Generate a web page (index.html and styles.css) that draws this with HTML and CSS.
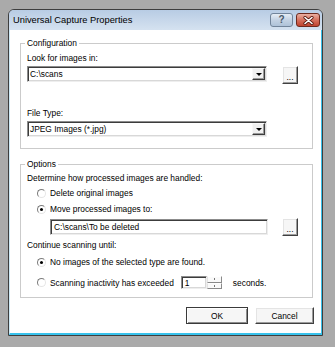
FILE: index.html
```html
<!DOCTYPE html>
<html lang="en">
<head>
    <meta charset="UTF-8">
    <meta name="viewport" content="width=device-width, initial-scale=1.0">
    <title>Universal Capture Properties</title>
    <link rel="stylesheet" href="styles.css">
</head>
<body>
    <div class="window">
        <div class="titlebar">
            <span class="title">Universal Capture Properties</span>
            <div class="caption-buttons">
                <span class="cap-btn help">?</span>
                <span class="cap-btn close">
                    <svg width="11" height="9" viewBox="0 0 11 9">
                        <path d="M2 1.5 L9 7.5 M9 1.5 L2 7.5" stroke="#5a1a10" stroke-width="3.2" stroke-linecap="round"/>
                        <path d="M2 1.5 L9 7.5 M9 1.5 L2 7.5" stroke="#fff" stroke-width="1.6" stroke-linecap="round"/>
                    </svg>
                </span>
            </div>
        </div>

        <div class="client">
            <fieldset class="group config">
                <legend>Configuration</legend>
                <div class="label">Look for images in:</div>
                <div class="row">
                    <div class="combo">
                        <span class="field-text">C:\scans</span>
                        <span class="drop"><span class="arrow"></span></span>
                    </div>
                    <button class="browse">...</button>
                </div>
                <div class="label file-type">File Type:</div>
                <div class="row">
                    <div class="combo">
                        <span class="field-text">JPEG Images (*.jpg)</span>
                        <span class="drop"><span class="arrow"></span></span>
                    </div>
                </div>
            </fieldset>

            <fieldset class="group options">
                <legend>Options</legend>
                <div class="label">Determine how processed images are handled:</div>
                <div class="radio-row first"><span class="radio"></span>Delete original images</div>
                <div class="radio-row"><span class="radio checked"></span>Move processed images to:</div>
                <div class="row indent">
                    <div class="textbox path">C:\scans\To be deleted</div>
                    <button class="browse">...</button>
                </div>
                <div class="label continue">Continue scanning until:</div>
                <div class="radio-row found"><span class="radio checked"></span>No images of the selected type are found.</div>
                <div class="radio-row inactivity">
                    <span class="radio"></span>Scanning inactivity has exceeded
                    <div class="spinner">
                        <div class="textbox seconds">1</div>
                        <div class="spin-buttons">
                            <span class="spin up"><span class="tick"></span></span>
                            <span class="spin down"><span class="tick"></span></span>
                        </div>
                    </div>
                    <span class="unit">seconds.</span>
                </div>
            </fieldset>

            <div class="dialog-buttons">
                <button class="btn default">OK</button>
                <button class="btn cancel">Cancel</button>
            </div>
        </div>
    </div>
</body>
</html>
```

FILE: styles.css
```css
* {
    box-sizing: border-box;
}
body {
    margin: 0;
    padding: 9px 0 0 8px;
    background-color: #aaaaaa;
    font-family: "Liberation Sans", Arial, sans-serif;
    font-size: 8.4px;
    color: #000;
}
.window {
    width: 315px;
    border: 1px solid #3e3e3e;
    border-radius: 6px 6px 0 0;
    background-color: #c2d4ea;
    overflow: hidden;
}
.titlebar {
    height: 20px;
    display: flex;
    justify-content: space-between;
    align-items: flex-start;
    background: linear-gradient(#b8cce4, #d5e2f0);
}
.title {
    font-size: 9.3px;
    line-height: 20px;
    padding-left: 4px;
}
.caption-buttons {
    display: flex;
    gap: 3px;
    padding: 3px 2px 0 0;
}
.cap-btn {
    height: 14px;
    border-radius: 3px;
    display: flex;
    align-items: center;
    justify-content: center;
}
.help {
    width: 23px;
    border: 1px solid #71849a;
    background: linear-gradient(#e6edf5, #c3d2e3 50%, #aec2d8);
    color: #4a5a6a;
    font-size: 10px;
    font-weight: bold;
    line-height: 12px;
}
.close {
    width: 24px;
    border: 1px solid #6e2a1e;
    background: linear-gradient(#eab0a2, #d6715e 50%, #c0432e);
}
.close svg {
    display: block;
}

.client {
    height: 305px;
    background-color: #fff;
    border-left: 1px solid #cfeaf6;
    border-right: 1px solid #38c2ec;
    border-bottom: 2px solid #38c2ec;
    padding: 8px 8px 0 10px;
}
.group {
    margin: 0;
    border: 1px solid #cbcbcb;
    padding: 5px 13px 11px 6px;
}
.group legend {
    line-height: 10px;
    padding: 0 2px;
    margin-left: -2px;
}
.options {
    margin-top: 10px;
    padding: 4px 13px 8px 6px;
}
.label {
    line-height: 10px;
}
.file-type {
    margin-top: 24px;
}
.row {
    display: flex;
    align-items: flex-start;
    margin-top: 3px;
}
.combo,
.textbox {
    height: 16px;
    display: flex;
    align-items: center;
    background-color: #fff;
    border: 1px solid;
    border-color: #8c8c8c #eeeeee #eeeeee #8c8c8c;
    box-shadow: inset 1px 1px 0 #3c3c3c, inset -1px -1px 0 #d8d8d8;
}
.combo {
    width: 240px;
    padding: 0 1px 0 2px;
}
.field-text {
    flex: 1;
    line-height: 12px;
}
.drop {
    width: 13px;
    height: 12px;
    display: flex;
    align-items: center;
    justify-content: center;
    background-color: #f0f0f0;
    border: 1px solid;
    border-color: #f8f8f8 #3c3c3c #3c3c3c #f8f8f8;
    box-shadow: inset -1px -1px 0 #9a9a9a;
}
.arrow {
    width: 0;
    height: 0;
    border-left: 3px solid transparent;
    border-right: 3px solid transparent;
    border-top: 3px solid #000;
}
.browse {
    width: 16px;
    height: 18px;
    margin-left: 15px;
    padding: 3px 0 0;
    font-family: inherit;
    font-size: 8.4px;
    color: #000;
    background-color: #f6f6f6;
    border: 1px solid;
    border-color: #ffffff #404040 #404040 #ffffff;
    box-shadow: inset -1px -1px 0 #9c9c9c, inset 1px 1px 0 #e4e4e4;
}
.radio-row {
    display: flex;
    align-items: center;
    line-height: 10px;
    margin-top: 6px;
}
.radio-row.first {
    margin-top: 5px;
}
.radio {
    width: 9px;
    height: 9px;
    margin: 0 4px 0 10px;
    border-radius: 50%;
    border: 1px solid;
    border-color: #7c7c7c #e6e6e6 #e6e6e6 #7c7c7c;
    background-color: #fff;
    display: flex;
    align-items: center;
    justify-content: center;
}
.radio.checked::after {
    content: "";
    width: 3px;
    height: 3px;
    border-radius: 50%;
    background-color: #000;
}
.indent {
    margin-top: 5px;
    padding-left: 23px;
}
.textbox {
    padding-left: 3px;
}
.path {
    width: 218px;
}
.indent .browse {
    margin-left: 14px;
    margin-top: -1px;
}
.continue {
    margin-top: 4px;
}
.radio-row.found {
    margin-top: 7px;
}
.radio-row.inactivity {
    margin-top: 9px;
    height: 13px;
}
.spinner {
    display: flex;
    margin-left: 7px;
}
.seconds {
    width: 26px;
    height: 13px;
}
.spin-buttons {
    width: 15px;
    height: 13px;
    display: flex;
    flex-direction: column;
}
.spin {
    flex: 1;
    display: flex;
    align-items: center;
    justify-content: center;
    background-color: #fafafa;
    border: 1px solid;
    border-color: #ffffff #8a8a8a #8a8a8a #e2e2e2;
}
.tick {
    width: 1px;
    height: 2px;
    background-color: #777;
}
.unit {
    margin-left: 11px;
}
.dialog-buttons {
    display: flex;
    justify-content: flex-end;
    gap: 7px;
    margin: 9px -1px 0 0;
}
.btn {
    height: 17px;
    padding: 0;
    font-family: inherit;
    font-size: 8.4px;
    color: #000;
    background-color: #f6f6f6;
    border: 1px solid;
    border-color: #ffffff #404040 #404040 #ffffff;
    box-shadow: inset -1px -1px 0 #9c9c9c, inset 1px 1px 0 #e4e4e4;
}
.btn.default {
    width: 62px;
    border-color: #3a3a3a;
    box-shadow: inset 1px 1px 0 #ffffff, inset -1px -1px 0 #8c8c8c;
}
.btn.cancel {
    width: 59px;
}
```
